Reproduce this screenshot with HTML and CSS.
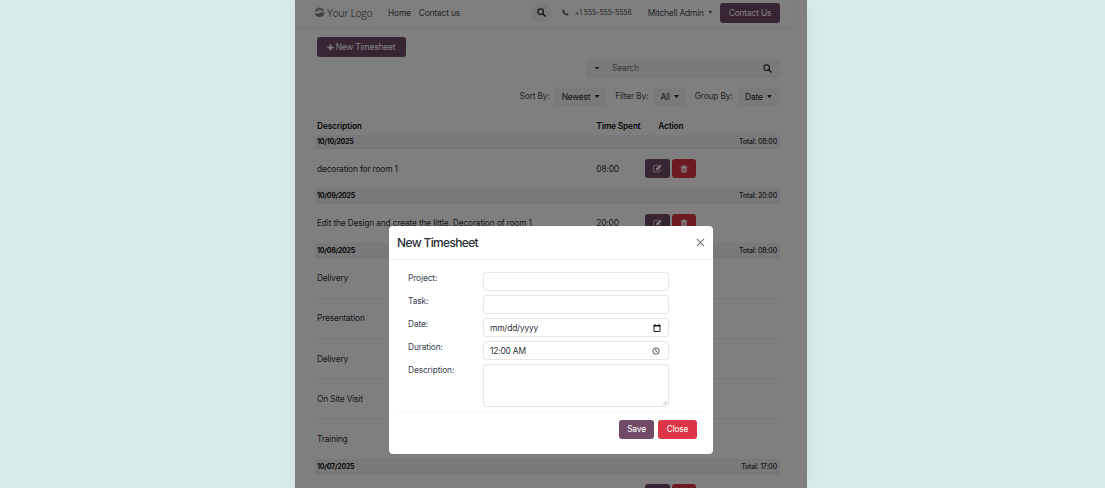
FILE: index.html
```html
<!DOCTYPE html>
<html lang="en">
<head>
    <meta charset="UTF-8">
    <meta name="viewport" content="width=device-width, initial-scale=1.0">
    <title>Timesheets</title>
    <link rel="stylesheet" href="styles.css">
</head>
<body>
    <svg class="sprite" width="0" height="0">
        <symbol id="icon-search" viewBox="0 0 16 16">
            <circle cx="6.5" cy="6.5" r="4.9" fill="none" stroke="currentColor" stroke-width="2"/>
            <path d="M10.2 10.2L14.4 14.4" stroke="currentColor" stroke-width="2.5" stroke-linecap="round"/>
        </symbol>
        <symbol id="icon-edit" viewBox="0 0 16 16">
            <path d="M13 9.5V12a2 2 0 0 1-2 2H3a2 2 0 0 1-2-2V4.5a2 2 0 0 1 2-2H9.5" fill="none" stroke="currentColor" stroke-width="1.2"/>
            <path d="M5.5 8L12.3 1.2L15.2 4.1L8.4 10.9H5.5Z" fill="currentColor"/>
        </symbol>
        <symbol id="icon-trash" viewBox="0 0 16 16">
            <path d="M1.5 3.2H5L5.8 1H10.2L11 3.2H14.5V4.8H13.3V13.5a1.7 1.7 0 0 1-1.7 1.7H4.4a1.7 1.7 0 0 1-1.7-1.7V4.8H1.5Z" fill="currentColor"/>
            <path d="M5.7 6.5V12.8M8 6.5V12.8M10.3 6.5V12.8" stroke="#dc3545" stroke-width="1"/>
        </symbol>
    </svg>

    <div class="page">
        <header class="navbar">
            <a class="logo">
                <svg class="logo-mark" viewBox="0 0 20 20">
                    <path d="M1 8A9.3 9.3 0 0 1 19 8H14Q12 4 9 6Q7 8 5 8Z" fill="#9a9a9a"/>
                    <path d="M1 12H7Q10 12 12 10H19A9.3 9.3 0 0 1 1 12Z" fill="#808080"/>
                </svg>
                <span>Your Logo</span>
            </a>
            <nav class="menu">
                <a>Home</a>
                <a>Contact us</a>
            </nav>
            <div class="nav-right">
                <span class="round-btn"><svg class="icon"><use href="#icon-search"/></svg></span>
                <span class="phone">
                    <svg class="phone-icon" viewBox="0 0 16 16"><path d="M4.5 1L6.5 5L4.9 6.7Q6.3 9.7 9.3 11.1L11 9.5L15 11.5Q14.5 15 11.5 15Q7.5 14.5 4.5 11.5Q1.5 8.5 1 4.5Q1 1.5 4.5 1Z" fill="currentColor"/></svg>
                    <span>+1 555-555-5556</span>
                </span>
                <span class="user">Mitchell Admin <i class="caret"></i></span>
                <a class="btn btn-primary btn-contact">Contact Us</a>
            </div>
        </header>

        <main class="content">
            <a class="btn btn-primary btn-new">
                <svg class="plus" viewBox="0 0 8 8"><path d="M4 .5V7.5M.5 4H7.5" stroke="currentColor" stroke-width="2"/></svg>
                New Timesheet
            </a>

            <div class="search-bar">
                <span class="search-toggle"><i class="caret"></i></span>
                <span class="search-input">Search</span>
                <svg class="icon"><use href="#icon-search"/></svg>
            </div>

            <div class="filters">
                <span class="filter-label">Sort By:</span>
                <span class="filter-btn newest">Newest <i class="caret"></i></span>
                <span class="filter-label">Filter By:</span>
                <span class="filter-btn all">All <i class="caret"></i></span>
                <span class="filter-label">Group By:</span>
                <span class="filter-btn date">Date <i class="caret"></i></span>
            </div>

            <div class="table">
                <div class="row head"><span>Description</span><span>Time Spent</span><span class="action-head">Action</span></div>

                <div class="group"><b>10/10/2025</b><span>Total: 08:00</span></div>
                <div class="row">
                    <span>decoration for room 1</span><span>08:00</span>
                    <span class="actions">
                        <a class="btn btn-primary btn-icon"><svg class="icon"><use href="#icon-edit"/></svg></a>
                        <a class="btn btn-danger btn-icon"><svg class="icon"><use href="#icon-trash"/></svg></a>
                    </span>
                </div>

                <div class="group"><b>10/09/2025</b><span>Total: 20:00</span></div>
                <div class="row">
                    <span>Edit the Design and create the little. Decoration of room 1.</span><span>20:00</span>
                    <span class="actions">
                        <a class="btn btn-primary btn-icon"><svg class="icon"><use href="#icon-edit"/></svg></a>
                        <a class="btn btn-danger btn-icon"><svg class="icon"><use href="#icon-trash"/></svg></a>
                    </span>
                </div>

                <div class="group"><b>10/08/2025</b><span>Total: 08:00</span></div>
                <div class="row"><span>Delivery</span></div>
                <div class="row"><span>Presentation</span></div>
                <div class="row"><span>Delivery</span></div>
                <div class="row"><span>On Site Visit</span></div>
                <div class="row"><span>Training</span></div>

                <div class="group"><b>10/07/2025</b><span>Total: 17:00</span></div>
                <div class="row">
                    <span></span><span></span>
                    <span class="actions">
                        <a class="btn btn-primary btn-icon"><svg class="icon"><use href="#icon-edit"/></svg></a>
                        <a class="btn btn-danger btn-icon"><svg class="icon"><use href="#icon-trash"/></svg></a>
                    </span>
                </div>
            </div>
        </main>

        <div class="backdrop">
            <div class="modal">
                <div class="modal-header">
                    <h5>New Timesheet</h5>
                    <svg class="close" viewBox="0 0 10 10"><path d="M1 1L9 9M9 1L1 9" stroke="currentColor" stroke-width="1.2"/></svg>
                </div>
                <div class="modal-body">
                    <div class="field"><label>Project:</label><div class="control"></div></div>
                    <div class="field"><label>Task:</label><div class="control"></div></div>
                    <div class="field">
                        <label>Date:</label>
                        <div class="control">
                            <span>mm/dd/yyyy</span>
                            <svg class="picker" viewBox="0 0 8 8"><path d="M1 1.5H7V7.5H1Z" fill="none" stroke="#111" stroke-width=".9"/><path d="M.5 1H7.5V2.5H.5ZM1.5 0H2.5V1H1.5ZM5.5 0H6.5V1H5.5Z" fill="#111"/></svg>
                        </div>
                    </div>
                    <div class="field">
                        <label>Duration:</label>
                        <div class="control">
                            <span>12:00 AM</span>
                            <svg class="picker clock" viewBox="0 0 8 8"><circle cx="4" cy="4" r="3.2" fill="none" stroke="#333" stroke-width=".8"/><path d="M3.8 1.8V4.1L5.7 5.3" fill="none" stroke="#333" stroke-width=".8"/></svg>
                        </div>
                    </div>
                    <div class="field">
                        <label>Description:</label>
                        <div class="control textarea">
                            <svg class="grip" viewBox="0 0 6 6"><path d="M0 6L6 0M3 6L6 3" stroke="#777" stroke-width=".7"/></svg>
                        </div>
                    </div>
                </div>
                <div class="modal-footer">
                    <a class="btn btn-primary btn-save">Save</a>
                    <a class="btn btn-danger btn-close">Close</a>
                </div>
            </div>
        </div>
    </div>
</body>
</html>
```
FILE: styles.css
```css
* {
    box-sizing: border-box;
}
body {
    margin: 0;
    height: 488px;
    overflow: hidden;
    background: #d9ebe8;
    font-family: "Inter", "Liberation Sans", sans-serif;
    font-size: 8.4px;
    letter-spacing: -0.17px;
    line-height: 12px;
    color: #2b3035;
}
.sprite {
    display: block;
}
.page {
    position: relative;
    width: 512px;
    height: 488px;
    margin-left: 295px;
    overflow: hidden;
    background: #fff;
    box-shadow: 0 0 16px rgba(0, 0, 0, 0.05);
}
.icon {
    display: block;
    width: 9px;
    height: 9px;
}
/* Small dropdown triangle */
.caret {
    display: inline-block;
    width: 5px;
    height: 3px;
    background: currentColor;
    clip-path: polygon(0 0, 100% 0, 50% 100%);
    vertical-align: 2px;
    margin-left: 2px;
}
.btn {
    display: flex;
    align-items: center;
    justify-content: center;
    border-radius: 3px;
    color: #fff;
    white-space: nowrap;
}
.btn-primary {
    background: #714b67;
}
.btn-danger {
    background: #dc3545;
}

/* Navbar */
.navbar {
    display: flex;
    align-items: center;
    width: 504px;
    height: 28px;
    padding: 0 18px 2px 20px;
    border-bottom: 1px solid #f0f0f0;
    border-right: 1px solid #f8f8f8;
    color: #4a4a4a;
}
.logo {
    display: flex;
    align-items: center;
    gap: 2px;
    width: 73px;
    font-family: "Open Sans", sans-serif;
    font-size: 10.4px;
    letter-spacing: -0.4px;
    color: #777;
}
.logo-mark {
    width: 11px;
    height: 11px;
    margin-left: -1px;
}
.menu {
    display: flex;
    gap: 8px;
}
.nav-right {
    display: flex;
    align-items: center;
    margin-left: auto;
}
.round-btn {
    display: flex;
    align-items: center;
    justify-content: center;
    width: 20px;
    height: 20px;
    margin-right: 10px;
    border-radius: 50%;
    background: #f3f3f3;
    color: #222;
}
.phone {
    display: flex;
    align-items: center;
    gap: 6px;
    margin-right: 16px;
    font-size: 7px;
    letter-spacing: -0.1px;
    white-space: nowrap;
}
.phone-icon {
    width: 7px;
    height: 7px;
}
.user {
    margin-right: 7px;
    white-space: nowrap;
}
.btn-contact {
    width: 60px;
    height: 20px;
}

/* List */
.content {
    padding: 9px 27px 0 20px;
}
.btn-new {
    width: 89px;
    height: 20px;
    margin-left: 2px;
    padding-right: 1px;
    gap: 2px;
}
.plus {
    width: 7px;
    height: 7px;
}
.search-bar {
    display: flex;
    align-items: center;
    width: 194px;
    height: 19px;
    margin: 2px 0 0 auto;
    padding: 0 8px 1px 0;
    border-radius: 3px;
    background: #f4f4f4;
}
.search-toggle {
    display: flex;
    align-items: center;
    justify-content: center;
    width: 21px;
    height: 18px;
    border-right: 1px solid #ececec;
}
.search-input {
    flex: 1;
    padding-left: 5px;
    color: #777;
}
.filters {
    display: flex;
    justify-content: flex-end;
    margin-top: 9px;
}
.filter-label {
    padding-top: 3px;
    color: #4a4a4a;
}
.filter-btn {
    height: 19px;
    margin: 0 8px 0 4.5px;
    padding-top: 4px;
    border-radius: 3px;
    background: #f4f4f4;
    color: #212529;
    text-align: center;
    white-space: nowrap;
}
.newest {
    width: 53px;
}
.all {
    width: 34px;
}
.date {
    width: 43px;
    margin-right: 0;
}
.table {
    margin-top: 12px;
}
.row {
    display: grid;
    grid-template-columns: 279.3px 49px 1fr;
    align-items: center;
    height: 40.3px;
    padding: 0.4px 0 0 2px;
    border-bottom: 1px solid #f0f0f0;
    white-space: nowrap;
}
.head {
    height: 16.5px;
    padding-top: 0;
    border: 0;
    font-weight: 600;
    color: #111;
}
.action-head {
    padding-left: 13px;
}
.group {
    display: flex;
    align-items: center;
    justify-content: space-between;
    height: 14.4px;
    padding: 1px 3px 0 2px;
    background: #f2f2f2;
    border-bottom: 1px solid #e6e6e6;
    font-size: 7px;
}
.group b {
    font-weight: 700;
    letter-spacing: -0.25px;
    color: #111;
}
.group span {
    font-weight: 500;
    letter-spacing: -0.2px;
}
.actions {
    display: flex;
    gap: 2px;
}
.btn-icon {
    width: 25px;
    height: 19px;
}
.btn-danger.btn-icon {
    width: 24px;
}
.btn-danger .icon {
    width: 8px;
    height: 8px;
}

/* Modal */
.backdrop {
    position: absolute;
    inset: 0;
    padding: 226px 94px 0;
    background: rgba(0, 0, 0, 0.5);
}
.modal {
    width: 324px;
    height: 228.4px;
    border-radius: 4px;
    background: #fff;
}
.modal-header {
    display: flex;
    align-items: center;
    justify-content: space-between;
    height: 34px;
    padding: 0 8px;
    border-bottom: 1px solid #f2f2f2;
}
h5 {
    margin: 0;
    font-size: 12px;
    font-weight: 500;
    letter-spacing: -0.65px;
}
.close {
    width: 9px;
    height: 9px;
    color: #777;
}
.modal-body {
    display: flex;
    flex-direction: column;
    gap: 4px;
    padding: 12px 44px 0 19px;
}
.field {
    display: flex;
}
.field label {
    width: 75px;
    letter-spacing: -0.13px;
    color: #374151;
}
.control {
    display: flex;
    align-items: center;
    justify-content: space-between;
    width: 186px;
    height: 19px;
    padding: 0 7px 0 6px;
    border: 1px solid #e6e6e6;
    border-radius: 3px;
}
.picker {
    width: 8px;
    height: 8px;
}
.clock {
    margin-right: 1px;
}
.textarea {
    height: 43px;
    align-items: flex-end;
    justify-content: flex-end;
    padding: 0 1px 1px;
}
.grip {
    width: 4px;
    height: 4px;
}
.modal-footer {
    display: flex;
    justify-content: flex-end;
    gap: 4px;
    margin: 4px 8px 0;
    padding: 7.5px 8px 0;
    border-top: 1px solid #f6f6f6;
}
.btn-save {
    width: 35px;
    height: 19px;
}
.btn-close {
    width: 39px;
    height: 19px;
}
```
